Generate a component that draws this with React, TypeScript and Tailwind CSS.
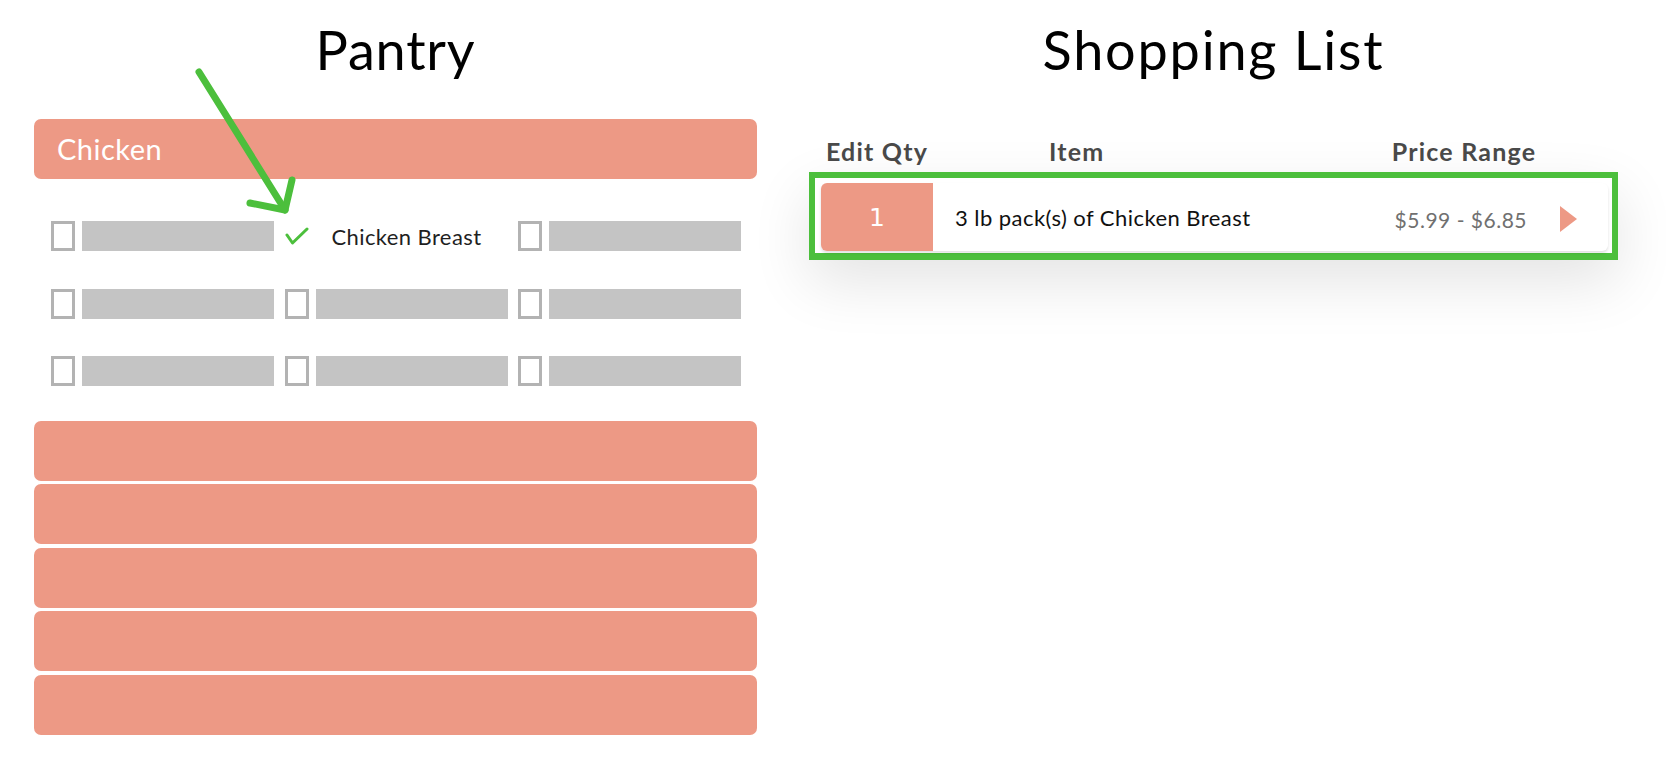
import React from 'react';

const SALMON = 'bg-[#ED9985]';

const Checkbox: React.FC = () => (
  <div className="w-[24px] h-[30px] border-[3.5px] border-[#b3b3b3] bg-white shrink-0" />
);

const PantryCell: React.FC<{ checked?: boolean; label?: string }> = ({ checked, label }) => {
  if (checked) {
    return (
      <div className="flex items-center h-[30px] w-[223px]">
        <svg width="24" height="22" viewBox="0 0 24 22" className="shrink-0">
          <path d="M2 10 L7.5 18 L22 4" fill="none" stroke="#4CBF3C" strokeWidth="3" strokeLinecap="round" strokeLinejoin="round" />
        </svg>
        <span className="ml-[23px] text-[22px] tracking-[0.4px] text-[#1f1f1f] whitespace-nowrap">{label}</span>
      </div>
    );
  }
  return (
    <div className="flex items-center gap-[7px] h-[30px] w-[223px]">
      <Checkbox />
      <div className="h-[30px] w-[192px] bg-[#c4c4c4]" />
    </div>
  );
};

const Pantry: React.FC = () => {
  const rows = [0, 1, 2];
  return (
    <div className="ml-[34px] w-[723px] flex flex-col">
      <h1 className="pt-[23px] text-[54px] leading-none tracking-[0.8px] text-center text-black">Pantry</h1>
      <div className={`mt-[42px] h-[60px] rounded-[7px] ${SALMON} flex items-center pl-[23px]`}>
        <span className="text-[29px] tracking-[0.5px] text-white">Chicken</span>
      </div>
      <div className="mt-[42px] pl-[17px] flex flex-col gap-y-[37.5px]">
        {rows.map((r) => (
          <div key={r} className="flex gap-x-[10.5px]">
            <PantryCell />
            {r === 0 ? <PantryCell checked label="Chicken Breast" /> : <PantryCell />}
            <PantryCell />
          </div>
        ))}
      </div>
      <div className="mt-[34.5px] flex flex-col gap-[3.5px]">
        {[0, 1, 2, 3, 4].map((i) => (
          <div key={i} className={`h-[60px] rounded-[7px] ${SALMON}`} />
        ))}
      </div>
    </div>
  );
};

const ShoppingList: React.FC = () => (
  <div className="ml-[52px] w-[809px] flex flex-col">
    <h1 className="pt-[23px] text-[54px] leading-none tracking-[1.8px] text-center text-black">Shopping List</h1>
    <div className="mt-[62px] flex items-center text-[25px] leading-none font-bold tracking-[1.2px] text-[#4a4a4a] pl-[2px] pr-[64px]">
      <div className="w-[132px] text-center whitespace-nowrap">Edit Qty</div>
      <div className="ml-[106px]">Item</div>
      <div className="ml-auto w-[180px] text-center whitespace-nowrap">Price Range</div>
    </div>
    <div className="mt-[8px] border-[6px] border-b-[7px] border-[#4CBF3C] pl-[6px] pr-[4px] pt-[5px] pb-[2px] shadow-[0_22px_60px_rgba(0,0,0,0.11)]">
      <div className="h-[68px] rounded-[6px] bg-white flex items-center shadow-[0_2px_3px_rgba(0,0,0,0.12)]">
        <div className={`w-[112px] h-full rounded-l-[6px] ${SALMON} flex items-center justify-center`}>
          <span className="pt-[2px] font-['DejaVu_Sans'] font-normal text-[25px] text-white">1</span>
        </div>
        <div className="pl-[22px] text-[22px] tracking-[0.45px] text-[#111] whitespace-nowrap">3 lb pack(s) of Chicken Breast</div>
        <div className="ml-auto pt-[5px] text-[21px] tracking-[0.5px] text-[#707070] whitespace-nowrap">$5.99 - $6.85</div>
        <svg width="17" height="26" viewBox="0 0 17 26" className="ml-[33px] mr-[31px] mt-[4px]">
          <polygon points="0,0 17,13 0,26" fill="#ED9985" />
        </svg>
      </div>
    </div>
  </div>
);

export default function App() {
  return (
    <div className="relative w-[1666px] h-[766px] bg-white flex font-['Lato',sans-serif] overflow-hidden">
      <Pantry />
      <ShoppingList />
      <svg className="absolute left-0 top-0 pointer-events-none" width="1666" height="766">
        <path d="M199 72 L285 210" fill="none" stroke="#4CBF3C" strokeWidth="7" strokeLinecap="round" />
        <path d="M250 203 L285 210 L292 180" fill="none" stroke="#4CBF3C" strokeWidth="7" strokeLinecap="round" strokeLinejoin="round" />
      </svg>
    </div>
  );
}
